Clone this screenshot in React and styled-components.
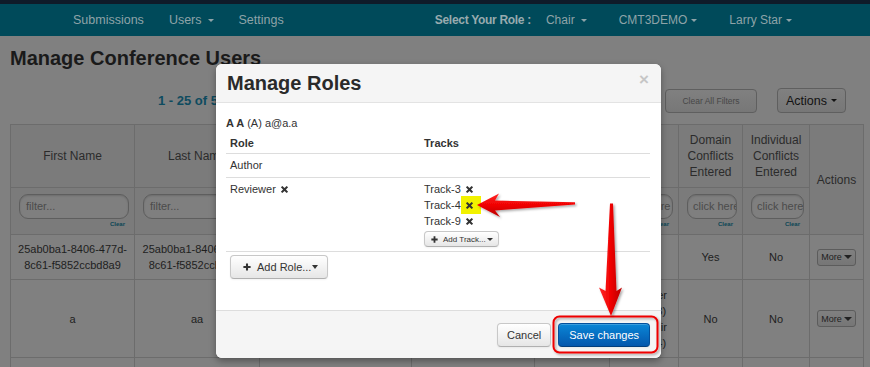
import React from "react";
import styled, { createGlobalStyle } from "styled-components";

const GlobalStyle = createGlobalStyle`
  html, body {
    margin: 0;
    padding: 0;
  }
  body {
    background: #808080;
    font-family: "Liberation Sans", Arial, Helvetica, sans-serif;
    color: #1d1d1d;
  }
`;

const Page = styled.div`
  position: relative;
  width: 870px;
  height: 367px;
  overflow: hidden;
`;

const TopStrip = styled.div`
  height: 4px;
  background: #0f1b29;
`;

const NavBar = styled.nav`
  display: flex;
  align-items: center;
  height: 32px;
  padding: 0 78px 0 73px;
  background: #004a5a;
`;

const NavGroup = styled.div`
  display: flex;
  align-items: center;
  gap: ${(p) => p.$gap}px;
  margin-left: ${(p) => (p.$right ? "auto" : "0")};
`;

const NavItem = styled.span`
  display: inline-flex;
  align-items: center;
  font-size: ${(p) => p.$size || 12.5}px;
  color: #8ea3a8;
`;

const RoleLabel = styled.span`
  font-size: 12px;
  font-weight: bold;
  letter-spacing: -0.3px;
  color: #98abaf;
`;

const Caret = styled.span`
  display: inline-block;
  width: 0;
  height: 0;
  margin-left: ${(p) => p.$gap ?? 6}px;
  border-left: ${(p) => p.$w ?? 3}px solid transparent;
  border-right: ${(p) => p.$w ?? 3}px solid transparent;
  border-top: ${(p) => p.$h ?? 3}px solid currentColor;
`;

const Title = styled.h1`
  margin: 10px 0 0 10px;
  font-size: 20px;
  line-height: 24px;
  font-weight: bold;
  color: #1a1a1a;
`;

const Toolbar = styled.div`
  display: flex;
  align-items: center;
  height: 25px;
  margin: 18px 24px 0 158px;
`;

const PageInfo = styled.span`
  font-size: 13px;
  font-weight: bold;
  color: #0e4b5f;
`;

const ToolButtons = styled.div`
  display: flex;
  align-items: center;
  gap: 20px;
  margin-left: auto;
`;

const DimButton = styled.button`
  display: inline-flex;
  align-items: center;
  justify-content: center;
  box-sizing: border-box;
  width: ${(p) => p.$w}px;
  height: ${(p) => p.$h}px;
  padding: 0;
  font-family: inherit;
  font-size: ${(p) => p.$fs}px;
  color: ${(p) => p.$color};
  background: linear-gradient(#808080, #777);
  border: 1px solid #5f5f5f;
  border-radius: 4px;
`;

const Grid = styled.table`
  margin: 11px 0 0 10px;
  width: 853px;
  border-collapse: collapse;
  table-layout: fixed;
`;

const Col = styled.col`
  width: ${(p) => p.$w}px;
`;

const HeadRow = styled.tr`
  height: ${(p) => p.$h}px;
  background: #7b7b7b;
`;

const BodyRow = styled.tr`
  height: ${(p) => p.$h}px;
  background: #808080;
`;

const Th = styled.th`
  padding: 0 4px;
  border: 1px solid #6c6c6c;
  font-size: 12px;
  font-weight: normal;
  line-height: 16px;
  color: #2b2b2b;
  text-align: center;
  vertical-align: middle;
`;

const FilterCell = styled.td`
  padding: 0 5px 0 8px;
  border: 1px solid #6c6c6c;
  vertical-align: middle;
`;

const FilterInput = styled.div`
  box-sizing: border-box;
  height: 25px;
  padding-left: ${(p) => (p.$center ? 5 : 6)}px;
  border: 1px solid #5e5e5e;
  border-radius: 9px;
  background: #7f7f7f;
  box-shadow: inset 0 1px 2px rgba(0, 0, 0, 0.15);
  font-size: 11px;
  line-height: 23px;
  color: #4b4b4b;
  white-space: nowrap;
  overflow: hidden;
`;

const ClearLink = styled.div`
  margin-top: 2px;
  padding-right: 4px;
  font-size: 6px;
  font-weight: bold;
  line-height: 7px;
  color: #0b4655;
  text-align: right;
`;

const Td = styled.td`
  padding: 0 4px;
  border: 1px solid #6c6c6c;
  font-size: 11px;
  line-height: 16px;
  color: #1e1e1e;
  text-align: center;
  vertical-align: middle;
`;

const MoreButton = styled.button`
  display: inline-flex;
  align-items: center;
  height: 17px;
  padding: 0 3px;
  font-family: inherit;
  font-size: 9px;
  color: #222;
  background: linear-gradient(#808080, #767676);
  border: 1px solid #5c5c5c;
  border-radius: 3px;
`;

const Modal = styled.div`
  position: absolute;
  left: 216px;
  top: 64px;
  width: 445px;
  height: 294px;
  display: flex;
  flex-direction: column;
  background: #fff;
  border-radius: 6px;
  box-shadow: 0 3px 7px rgba(0, 0, 0, 0.35);
  overflow: hidden;
`;

const ModalHeader = styled.div`
  display: flex;
  align-items: center;
  justify-content: space-between;
  height: 38px;
  padding: 0 12px 0 11px;
  background: #f5f5f5;
  border-bottom: 1px solid #e3e3e3;
`;

const ModalTitle = styled.h3`
  margin: 0;
  font-size: 20px;
  font-weight: bold;
  color: #2a2a2a;
`;

const Close = styled.span`
  margin-top: -8px;
  font-size: 17px;
  font-weight: bold;
  line-height: 1;
  color: #c6c6c6;
`;

const ModalBody = styled.div`
  flex: 1;
  padding: 12px 11px 0 10px;
  font-size: 11px;
  color: #333;
`;

const Person = styled.div`
  line-height: 16px;
`;

const RoleTable = styled.table`
  width: 424px;
  margin-top: 2px;
  border-collapse: collapse;
  table-layout: fixed;
  font-size: 11px;
  color: #333;
`;

const RoleTh = styled.th`
  width: ${(p) => (p.$w ? `${p.$w}px` : "auto")};
  height: 20px;
  padding: 0 4px;
  text-align: left;
  font-weight: bold;
  border-bottom: 1px solid #ddd;
`;

const RoleTd = styled.td`
  padding: 3px 4px 4px;
  line-height: 16px;
  vertical-align: top;
  text-align: left;
  border-bottom: 1px solid #ddd;
`;

const TrackLine = styled.div`
  display: flex;
  align-items: center;
  height: 16px;
`;

const IconSlot = styled.span`
  display: inline-flex;
  align-items: center;
  height: 18px;
  margin: -1px 0 -1px ${(p) => (p.$hl ? 0 : 4)}px;
  padding: ${(p) => (p.$hl ? "0 7px 0 4px" : "0")};
  background: ${(p) => (p.$hl ? "#f2f200" : "transparent")};
`;

const Btn = styled.button`
  display: inline-flex;
  align-items: center;
  box-sizing: border-box;
  height: ${(p) => (p.$small ? 16 : 24)}px;
  margin-top: ${(p) => (p.$small ? 2 : 0)}px;
  padding: ${(p) => p.$pad};
  font-family: inherit;
  font-size: ${(p) => (p.$small ? 8 : 11)}px;
  color: ${(p) => (p.$primary ? "#fff" : "#333")};
  background: ${(p) =>
    p.$primary
      ? "linear-gradient(#0a86d6, #0457ad)"
      : "linear-gradient(#ffffff, #e6e6e6)"};
  border: 1px solid ${(p) => (p.$primary ? "#04509c" : "#c8c8c8")};
  border-bottom-color: ${(p) => (p.$primary ? "#033f7c" : "#b0b0b0")};
  border-radius: 4px;
  box-shadow: inset 0 1px 0 rgba(255, 255, 255, 0.2),
    0 1px 2px rgba(0, 0, 0, 0.05);
`;

const BtnLabel = styled.span`
  margin-left: ${(p) => p.$gap || 0}px;
`;

const AddRoleRow = styled.div`
  margin: 3px 0 0 4px;
`;

const ModalFooter = styled.div`
  display: flex;
  align-items: center;
  justify-content: flex-end;
  gap: 7px;
  height: 47px;
  padding-right: 11px;
  background: #f5f5f5;
  border-top: 1px solid #ddd;
`;

const Annotations = styled.svg`
  position: absolute;
  left: 0;
  top: 0;
  pointer-events: none;
`;

const RemoveIcon = () => (
  <svg width="9" height="9" viewBox="0 0 10 10">
    <path
      d="M1 2.6 L2.6 1 L5 3.4 L7.4 1 L9 2.6 L6.6 5 L9 7.4 L7.4 9 L5 6.6 L2.6 9 L1 7.4 L3.4 5 Z"
      fill="#333"
    />
  </svg>
);

const PlusIcon = ({ size = 8 }) => (
  <svg width={size} height={size} viewBox="0 0 10 10">
    <path d="M3.7 0.5h2.6v3.2h3.2v2.6H6.3v3.2H3.7V6.3H0.5V3.7h3.2z" fill="#333" />
  </svg>
);

const columns = [124, 125, 152, 123, 75, 69, 64, 67, 54];

const headers = [
  "First Name",
  "Last Name",
  "Email",
  "Organization",
  "Country",
  "Roles",
  "Domain Conflicts Entered",
  "Individual Conflicts Entered",
];

const filters = [
  "filter...",
  "filter...",
  "filter...",
  "filter...",
  "click here",
  "click here",
  "click here",
  "click here",
];

const users = [
  {
    id: "25ab0ba1-8406-477d-8c61-f5852ccbd8a9",
    first: "25ab0ba1-8406-477d-8c61-f5852ccbd8a9",
    last: "25ab0ba1-8406-477d-8c61-f5852ccbd8a9",
    email: "25ab0ba1@demo.org",
    org: "Demo",
    country: "US",
    roles: ["Author"],
    domain: "Yes",
    individual: "No",
    h: 45,
  },
  {
    id: "a",
    first: "a",
    last: "aa",
    email: "a@a.a",
    org: "A",
    country: "US",
    roles: ["Reviewer", "(Track-3)", "SubChair", "(Track-4)"],
    domain: "No",
    individual: "No",
    h: 78,
  },
];

const tracks = [
  { name: "Track-3" },
  { name: "Track-4", marked: true },
  { name: "Track-9" },
];

const App = () => {
  return (
    <Page>
      <GlobalStyle />
      <TopStrip />
      <NavBar>
        <NavGroup $gap={25}>
          <NavItem>Submissions</NavItem>
          <NavItem>
            Users
            <Caret />
          </NavItem>
          <NavItem>Settings</NavItem>
        </NavGroup>
        <NavGroup $gap={32} $right>
          <NavGroup $gap={15}>
            <RoleLabel>Select Your Role :</RoleLabel>
            <NavItem $size={12}>
              Chair
              <Caret />
            </NavItem>
          </NavGroup>
          <NavItem $size={12}>
            CMT3DEMO
            <Caret $gap={4} />
          </NavItem>
          <NavItem $size={12}>
            Larry Star
            <Caret $gap={4} />
          </NavItem>
        </NavGroup>
      </NavBar>

      <Title>Manage Conference Users</Title>

      <Toolbar>
        <PageInfo>1 - 25 of 56 Users</PageInfo>
        <ToolButtons>
          <DimButton $w={92} $h={24} $fs={8.5} $color="#474747">
            Clear All Filters
          </DimButton>
          <DimButton $w={69} $h={25} $fs={12.5} $color="#121212">
            Actions
            <Caret $gap={4} />
          </DimButton>
        </ToolButtons>
      </Toolbar>

      <Grid>
        <colgroup>
          {columns.map((w, i) => (
            <Col key={i} $w={w} />
          ))}
        </colgroup>
        <thead>
          <HeadRow $h={63}>
            {headers.map((h) => (
              <Th key={h}>{h}</Th>
            ))}
            <Th rowSpan={2}>Actions</Th>
          </HeadRow>
          <HeadRow $h={47}>
            {filters.map((f, i) => (
              <FilterCell key={i}>
                <FilterInput $center={f === "click here"}>{f}</FilterInput>
                <ClearLink>Clear</ClearLink>
              </FilterCell>
            ))}
          </HeadRow>
        </thead>
        <tbody>
          {users.map((u) => (
            <BodyRow key={u.id} $h={u.h}>
              <Td>{u.first}</Td>
              <Td>{u.last}</Td>
              <Td>{u.email}</Td>
              <Td>{u.org}</Td>
              <Td>{u.country}</Td>
              <Td>
                {u.roles.map((r) => (
                  <div key={r}>{r}</div>
                ))}
              </Td>
              <Td>{u.domain}</Td>
              <Td>{u.individual}</Td>
              <Td>
                <MoreButton>
                  More
                  <Caret $gap={2} $w={4} $h={4} />
                </MoreButton>
              </Td>
            </BodyRow>
          ))}
          <BodyRow $h={40}>
            {columns.map((_, i) => (
              <Td key={i} />
            ))}
          </BodyRow>
        </tbody>
      </Grid>

      <Modal>
        <ModalHeader>
          <ModalTitle>Manage Roles</ModalTitle>
          <Close>×</Close>
        </ModalHeader>
        <ModalBody>
          <Person>
            <b>A A</b> (A) a@a.a
          </Person>
          <RoleTable>
            <thead>
              <tr>
                <RoleTh $w={186}>Role</RoleTh>
                <RoleTh>Tracks</RoleTh>
              </tr>
            </thead>
            <tbody>
              <tr>
                <RoleTd>Author</RoleTd>
                <RoleTd />
              </tr>
              <tr>
                <RoleTd>
                  <TrackLine>
                    Reviewer
                    <IconSlot>
                      <RemoveIcon />
                    </IconSlot>
                  </TrackLine>
                </RoleTd>
                <RoleTd>
                  {tracks.map((t) => (
                    <TrackLine key={t.name}>
                      {t.name}
                      <IconSlot $hl={t.marked}>
                        <RemoveIcon />
                      </IconSlot>
                    </TrackLine>
                  ))}
                  <Btn $small $pad="0 5px 0 6px">
                    <PlusIcon size={7} />
                    <BtnLabel $gap={5}>Add Track...</BtnLabel>
                    <Caret $gap={1} $w={3} $h={3} />
                  </Btn>
                </RoleTd>
              </tr>
            </tbody>
          </RoleTable>
          <AddRoleRow>
            <Btn $pad="0 9px 0 12px">
              <PlusIcon />
              <BtnLabel $gap={6}>Add Role...</BtnLabel>
              <Caret $gap={1} $w={3.5} $h={4} />
            </Btn>
          </AddRoleRow>
        </ModalBody>
        <ModalFooter>
          <Btn $pad="0 9px">Cancel</Btn>
          <Btn $primary $pad="0 10px">
            Save changes
          </Btn>
        </ModalFooter>
      </Modal>

      <Annotations width="870" height="367" viewBox="0 0 870 367">
        <defs>
          <linearGradient id="redH" x1="0" y1="0" x2="0" y2="1">
            <stop offset="0" stopColor="#ff2a2a" />
            <stop offset="0.5" stopColor="#f00000" />
            <stop offset="1" stopColor="#b80000" />
          </linearGradient>
          <linearGradient id="redV" x1="0" y1="0" x2="1" y2="0">
            <stop offset="0" stopColor="#ff2a2a" />
            <stop offset="0.5" stopColor="#f00000" />
            <stop offset="1" stopColor="#b80000" />
          </linearGradient>
          <filter id="shadow" x="-20%" y="-20%" width="140%" height="140%">
            <feDropShadow dx="1.5" dy="1.5" stdDeviation="1.2" floodColor="#000" floodOpacity="0.35" />
          </filter>
        </defs>
        <rect
          x="553.5"
          y="316.5"
          width="104"
          height="36"
          rx="6"
          fill="none"
          stroke="#ee0000"
          strokeWidth="2"
          filter="url(#shadow)"
        />
        <polygon
          points="477,205 499,193.5 495,200.5 575,202.2 575,204.4 495,210.5 500,217"
          fill="url(#redH)"
          filter="url(#shadow)"
        />
        <polygon
          points="610,203.5 613,203.5 616.5,291 622,287.5 611,316 599,287.5 605.5,291"
          fill="url(#redV)"
          filter="url(#shadow)"
        />
      </Annotations>
    </Page>
  );
};

export default App;
